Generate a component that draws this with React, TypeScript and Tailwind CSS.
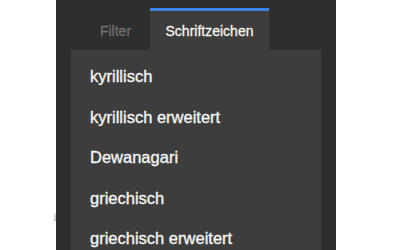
import React from "react";

const items = [
  "kyrillisch",
  "kyrillisch erweitert",
  "Dewanagari",
  "griechisch",
  "griechisch erweitert",
];

export default function App() {
  return (
    <div
      className="relative w-[400px] h-[250px] bg-white overflow-hidden"
      style={{ fontFamily: '"Liberation Sans", Arial, sans-serif' }}
    >
      <div className="absolute left-[54px] top-[213px] w-[2px] h-[8px] bg-gradient-to-b from-[#e6e6e6] to-[#c4c4c4]" />
      <div className="ml-[56px] w-[280px] h-[250px] bg-[#2e2e2e] flex flex-col">
        <div className="flex pt-[8px] h-[50px]">
          <div className="ml-[25px] w-[69px] h-[42px] pt-[3px] flex items-center justify-center text-[14px] leading-none text-[#6e6e6e] [-webkit-text-stroke:0.3px_#6e6e6e]">
            Filter
          </div>
          <div className="w-[119px] h-[42px] bg-[#3d3d3d] border-t-[3px] border-[#3d85e6] flex items-center justify-center text-[14px] leading-none text-[#f2f2f2] [-webkit-text-stroke:0.3px_#f2f2f2]">
            Schriftzeichen
          </div>
        </div>
        <div className="ml-[15px] w-[250px] flex-1 bg-[#3d3d3d] pt-[6px] pl-[19px]">
          {items.map((t) => (
            <div
              key={t}
              className="h-[40.5px] leading-[40.5px] text-[16.5px] text-[#f4f4f4] whitespace-nowrap [-webkit-text-stroke:0.35px_#f4f4f4]"
            >
              {t}
            </div>
          ))}
        </div>
      </div>
    </div>
  );
}
